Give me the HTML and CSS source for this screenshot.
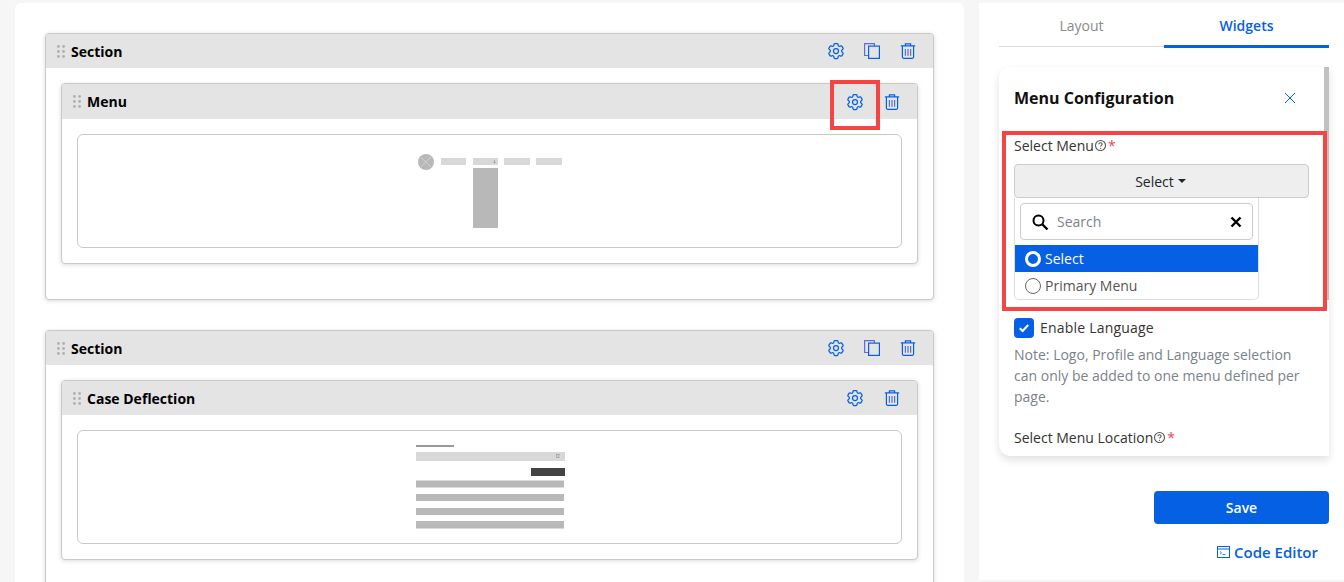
FILE: index.html
```html
<!DOCTYPE html>
<html lang="en">
<head>
    <meta charset="UTF-8">
    <meta name="viewport" content="width=device-width, initial-scale=1.0">
    <title>Page Builder</title>
    <link rel="stylesheet" href="styles.css">
</head>
<body>
    <svg class="sprite" width="0" height="0">
        <symbol id="i-gear" viewBox="0 0 24 24">
            <path fill="none" stroke="currentColor" stroke-width="1.5" d="M9.594 3.94c.09-.542.56-.94 1.11-.94h2.593c.55 0 1.02.398 1.11.94l.213 1.281c.063.374.313.686.645.87.074.04.147.083.22.127.325.196.72.257 1.075.124l1.217-.456a1.125 1.125 0 0 1 1.37.49l1.296 2.247a1.125 1.125 0 0 1-.26 1.431l-1.003.827c-.293.241-.438.613-.43.992a7.723 7.723 0 0 1 0 .255c-.008.378.137.75.43.991l1.004.827c.424.35.534.955.26 1.43l-1.298 2.247a1.125 1.125 0 0 1-1.369.491l-1.217-.456c-.355-.133-.75-.072-1.076.124a6.47 6.47 0 0 1-.22.128c-.331.183-.581.495-.644.869l-.213 1.281c-.09.543-.56.94-1.11.94h-2.594c-.55 0-1.019-.398-1.11-.94l-.213-1.281c-.062-.374-.312-.686-.644-.87a6.52 6.52 0 0 1-.22-.127c-.325-.196-.72-.257-1.076-.124l-1.217.456a1.125 1.125 0 0 1-1.369-.49l-1.297-2.247a1.125 1.125 0 0 1 .26-1.431l1.004-.827c.292-.24.437-.613.43-.991a6.932 6.932 0 0 1 0-.255c.007-.38-.138-.751-.43-.992l-1.004-.827a1.125 1.125 0 0 1-.26-1.43l1.297-2.247a1.125 1.125 0 0 1 1.37-.491l1.216.456c.356.133.751.072 1.076-.124.072-.044.146-.086.22-.128.332-.183.582-.495.644-.869l.214-1.28Z"/>
            <circle cx="12" cy="12" r="3" fill="none" stroke="currentColor" stroke-width="1.5"/>
        </symbol>
        <symbol id="i-copy" viewBox="0 0 16 16">
            <path fill="none" stroke="#5b6fd8" stroke-width="1.2" d="M4 12.5H.6V.6h9.8V3"/>
            <rect x="4.6" y="3.1" width="10.8" height="12.3" fill="none" stroke="currentColor" stroke-width="1.2"/>
        </symbol>
        <symbol id="i-trash" viewBox="0 0 16 16">
            <path fill="none" stroke="currentColor" stroke-width="1.2" d="M.8 2.9h14.4M5.4 2.9V.8h5.2v2.1M2.4 2.9v11.2c0 .7.5 1.2 1.2 1.2h8.8c.7 0 1.2-.5 1.2-1.2V2.9"/>
            <path fill="none" stroke="#5b6fd8" stroke-width="1.2" d="M5.4 6v6.8M8 6v6.8M10.6 6v6.8"/>
        </symbol>
        <symbol id="i-drag" viewBox="0 0 8 13">
            <circle cx="1.4" cy="1.5" r="1.4"/><circle cx="6.6" cy="1.5" r="1.4"/>
            <circle cx="1.4" cy="6.5" r="1.4"/><circle cx="6.6" cy="6.5" r="1.4"/>
            <circle cx="1.4" cy="11.5" r="1.4"/><circle cx="6.6" cy="11.5" r="1.4"/>
        </symbol>
        <symbol id="i-help" viewBox="0 0 12 12">
            <circle cx="6" cy="6" r="4.6" fill="none" stroke="currentColor"/>
            <path fill="none" stroke="currentColor" d="M4.5 4.9c0-2 3-2 3 0 0 1-1.5 1-1.5 2.1"/>
            <circle cx="6" cy="8.6" r=".6" fill="currentColor"/>
        </symbol>
    </svg>

    <div class="page">
        <main class="canvas">
            <section class="section">
                <div class="head">
                    <svg class="drag"><use href="#i-drag"/></svg>
                    <span class="head-title">Section</span>
                    <div class="head-actions">
                        <svg class="act gear"><use href="#i-gear"/></svg>
                        <svg class="act copy"><use href="#i-copy"/></svg>
                        <svg class="act trash"><use href="#i-trash"/></svg>
                    </div>
                </div>
                <div class="section-body">
                    <div class="widget">
                        <div class="head head-tall">
                            <svg class="drag"><use href="#i-drag"/></svg>
                            <span class="head-title">Menu</span>
                            <div class="head-actions">
                                <svg class="act gear"><use href="#i-gear"/></svg>
                                <svg class="act trash"><use href="#i-trash"/></svg>
                            </div>
                        </div>
                        <div class="widget-body">
                            <div class="preview">
                                <svg width="144" height="74" viewBox="0 0 144 74">
                                    <circle cx="8" cy="8" r="8" fill="#b8b8b8"/>
                                    <path d="M3 3l10 10M13 3L3 13" stroke="#d4d4d4" stroke-width=".8"/>
                                    <rect x="23" y="4" width="25" height="7" fill="#d8d8d8"/>
                                    <rect x="55" y="4" width="25" height="7" fill="#d8d8d8"/>
                                    <path d="M76.500 6v3M75.500 8l1 1.200 1-1.200" fill="none" stroke="#888" stroke-width=".6"/>
                                    <rect x="86" y="4" width="26" height="7" fill="#d8d8d8"/>
                                    <rect x="118" y="4" width="26" height="7" fill="#d8d8d8"/>
                                    <rect x="55" y="14" width="25" height="60" fill="#b8b8b8"/>
                                </svg>
                            </div>
                        </div>
                    </div>
                </div>
            </section>

            <section class="section">
                <div class="head">
                    <svg class="drag"><use href="#i-drag"/></svg>
                    <span class="head-title">Section</span>
                    <div class="head-actions">
                        <svg class="act gear"><use href="#i-gear"/></svg>
                        <svg class="act copy"><use href="#i-copy"/></svg>
                        <svg class="act trash"><use href="#i-trash"/></svg>
                    </div>
                </div>
                <div class="section-body">
                    <div class="widget">
                        <div class="head">
                            <svg class="drag"><use href="#i-drag"/></svg>
                            <span class="head-title">Case Deflection</span>
                            <div class="head-actions">
                                <svg class="act gear"><use href="#i-gear"/></svg>
                                <svg class="act trash"><use href="#i-trash"/></svg>
                            </div>
                        </div>
                        <div class="widget-body">
                            <div class="preview">
                                <svg class="wire-case" width="149" height="84" viewBox="0 0 149 84">
                                    <rect x="0" y="0" width="38" height="2" fill="#999"/>
                                    <rect x="0" y="7" width="149" height="9" fill="#d8d8d8"/>
                                    <rect x="140.500" y="9.500" width="2.500" height="3" fill="none" stroke="#999" stroke-width=".7"/>
                                    <rect x="115" y="23" width="34" height="8" fill="#444"/>
                                    <rect x="0" y="35.500" width="148" height="7" fill="#b8b8b8"/>
                                    <rect x="0" y="49" width="148" height="7" fill="#b8b8b8"/>
                                    <rect x="0" y="63" width="148" height="7" fill="#b8b8b8"/>
                                    <rect x="0" y="76" width="148" height="7.500" fill="#b8b8b8"/>
                                </svg>
                            </div>
                        </div>
                    </div>
                </div>
            </section>
        </main>

        <aside class="side">
            <div class="tabs">
                <div class="tab">Layout</div>
                <div class="tab tab-active">Widgets</div>
            </div>

            <div class="config">
                <div class="config-title">
                    <span>Menu Configuration</span>
                    <svg class="close" width="12" height="12" viewBox="0 0 12 12"><path d="M1 1l10 10M11 1L1 11" stroke="#0560e3" stroke-width="1"/></svg>
                </div>

                <label class="field-label">Select Menu<svg class="help"><use href="#i-help"/></svg><span class="req">*</span></label>
                <div class="select-btn">Select<span class="caret"></span></div>
                <div class="dropdown">
                    <div class="search">
                        <svg width="18" height="18" viewBox="0 0 18 18"><circle cx="7.500" cy="7.500" r="5" fill="none" stroke="#000" stroke-width="2"/><path d="M11.500 11.500l5 5" stroke="#000" stroke-width="2.400"/></svg>
                        <span class="search-text">Search</span>
                        <svg width="12" height="12" viewBox="0 0 12 12"><path d="M1.500 1.500l9 9M10.500 1.500l-9 9" stroke="#000" stroke-width="2.400"/></svg>
                    </div>
                    <div class="option option-active"><span class="radio radio-on"></span>Select</div>
                    <div class="option"><span class="radio"></span>Primary Menu</div>
                </div>

                <div class="check-row">
                    <span class="check">
                        <svg width="12" height="10" viewBox="0 0 12 10"><path d="M1.800 5.200l2.800 2.800 5.600-6" fill="none" stroke="#fff" stroke-width="2"/></svg>
                    </span>
                    Enable Language
                </div>
                <p class="note">Note: Logo, Profile and Language selection can only be added to one menu defined per page.</p>

                <label class="field-label field-label-last">Select Menu Location<svg class="help"><use href="#i-help"/></svg><span class="req">*</span></label>

                <div class="scrollbar"></div>
            </div>

            <div class="side-foot">
                <button class="save">Save</button>
                <a class="code-link">
                    <svg width="13" height="12" viewBox="0 0 13 12"><rect x=".5" y=".5" width="12" height="11" fill="none" stroke="#0560e3"/><path d="M.5 3h12" stroke="#0560e3"/><path d="M3 5.500l1.500 1.300L3 8M5.500 8.500h3" fill="none" stroke="#0560e3" stroke-width=".8"/></svg>
                    Code Editor
                </a>
            </div>
        </aside>
    </div>

    <!-- highlight boxes drawn over the screen -->
    <div class="mark mark-gear"></div>
    <div class="mark mark-select"></div>
</body>
</html>
```

FILE: styles.css
```css
* {
    box-sizing: border-box;
}

html, body {
    height: 582px;
}

body {
    margin: 0;
    overflow: hidden;
    position: relative;
    font-family: "Open Sans", sans-serif;
    font-size: 14px;
    color: #212529;
    background-color: #f6f6f6;
}

.sprite {
    position: absolute;
}

.page {
    display: flex;
    gap: 15px;
    height: 582px;
    padding: 3px 0 0 15px;
    overflow: hidden;
}

/* left canvas */
.canvas {
    width: 949px;
    height: 640px;
    padding: 30px;
    background-color: #fff;
    border-radius: 6px 6px 0 0;
}

.section {
    margin-bottom: 30px;
    background-color: #fff;
    border: 1px solid #c9c9c9;
    border-radius: 4px;
    box-shadow: 0 1px 4px rgba(0, 0, 0, 0.15);
}

.section-body {
    padding: 15px 15px 35px;
}

.head {
    display: flex;
    align-items: center;
    height: 34px;
    padding: 0 10px 0 11px;
    background-color: #e4e4e4;
    border-radius: 3px 3px 0 0;
}

.head-tall {
    height: 35px;
}

.drag {
    width: 8px;
    height: 13px;
    margin-right: 6px;
    fill: #b0b0b0;
}

.head-title {
    font-weight: 700;
    color: #000;
}

.head-actions {
    display: flex;
    align-items: center;
    margin-left: auto;
}

.act {
    color: #0560e3;
}

.gear {
    width: 20px;
    height: 20px;
}

.copy {
    width: 16px;
    height: 16px;
    margin-left: 18px;
}

.trash {
    width: 16px;
    height: 16px;
    margin: 0 7px 0 20px;
}

.widget {
    background-color: #fff;
    border: 1px solid #c9c9c9;
    border-radius: 4px;
    box-shadow: 0 1px 4px rgba(0, 0, 0, 0.15);
}

.widget .trash {
    margin-left: 19px;
}

.widget-body {
    padding: 15px;
}

.preview {
    display: flex;
    justify-content: center;
    align-items: center;
    height: 114px;
    border: 1px solid #c9c9c9;
    border-radius: 6px;
}

.wire-case {
    margin-left: 2px;
}

/* right panel */
.side {
    position: relative;
    width: 365px;
    height: 577px;
    padding: 0 15px 0 20px;
    background-color: #fff;
}

.tabs {
    display: flex;
    height: 44px;
    border-bottom: 1px solid #dcdcdc;
}

.tab {
    flex: 1;
    padding-top: 13px;
    text-align: center;
    color: #8a8a8a;
}

.tab-active {
    height: 45px;
    font-weight: 600;
    color: #0560e3;
    border-bottom: 3px solid #0560e3;
}

.config {
    position: relative;
    height: 389px;
    margin-top: 20px;
    padding: 0 20px 0 15px;
    overflow: hidden;
    background-color: #fff;
    border-radius: 12px 0 0 12px;
    box-shadow: 0 4px 8px rgba(0, 0, 0, 0.12);
}

.config-title {
    display: flex;
    align-items: center;
    justify-content: space-between;
    height: 62px;
    padding: 0 13px 0 0;
    font-size: 16px;
    font-weight: 700;
    color: #111;
}

.field-label {
    display: flex;
    align-items: center;
    height: 20px;
    margin-top: 6px;
    margin-bottom: 9px;
    color: #333;
}

.field-label-last {
    margin-top: 20px;
}

.help {
    width: 13px;
    height: 13px;
    color: #555;
}

.req {
    margin-left: 1px;
    color: #e8425a;
}

.select-btn {
    display: flex;
    justify-content: center;
    align-items: center;
    height: 34px;
    padding-right: 2px;
    background-color: #eee;
    border: 1px solid #ccc;
    border-radius: 4px;
    color: #212529;
}

.caret {
    width: 0;
    height: 0;
    margin-left: 4px;
    border: 4px solid transparent;
    border-top-color: #212529;
    border-bottom-width: 0;
}

.dropdown {
    width: 245px;
    height: 102px;
    padding-top: 5px;
    background-color: #fff;
    border: 1px solid #ddd;
    border-top: 0;
    border-radius: 0 0 5px 5px;
}

.search {
    display: flex;
    align-items: center;
    height: 37px;
    margin: 0 5px 5px;
    padding: 0 10px;
    border: 1px solid #ccc;
    border-radius: 4px;
}

.search-text {
    flex: 1;
    margin-left: 8px;
    color: #7b8289;
}

.option {
    display: flex;
    align-items: center;
    height: 27px;
    padding-left: 10px;
    color: #555;
}

.option-active {
    background-color: #0560e3;
    color: #fff;
}

.radio {
    width: 16px;
    height: 16px;
    margin-right: 4px;
    background-color: #fff;
    border: 1px solid #666;
    border-radius: 50%;
}

.radio-on {
    background-color: #0560e3;
    border: 3px solid #fff;
}

.check-row {
    display: flex;
    align-items: center;
    gap: 6px;
    height: 20px;
    margin-top: 18px;
    font-weight: 500;
    letter-spacing: 0.2px;
    line-height: 18px;
    color: #333;
}

.check {
    display: flex;
    justify-content: center;
    align-items: center;
    width: 20px;
    height: 20px;
    background-color: #0560e3;
    border-radius: 4px;
}

.note {
    margin: 6px 0 0;
    line-height: 21px;
    color: #7b8289;
}

.scrollbar {
    position: absolute;
    top: 0;
    right: 0;
    width: 5px;
    height: 233px;
    background-color: #c1c1c1;
}

.side-foot {
    display: flex;
    flex-direction: column;
    align-items: flex-end;
    margin-top: 35px;
}

.save {
    width: 175px;
    height: 33px;
    font: 600 14px "Open Sans", sans-serif;
    color: #fff;
    background-color: #0560e3;
    border: 0;
    border-radius: 4px;
}

.code-link {
    display: flex;
    align-items: center;
    gap: 4px;
    margin: 18px 11px 0 0;
    font-size: 15px;
    font-weight: 600;
    color: #0560e3;
}

/* red highlight boxes */
.mark {
    position: absolute;
    border: 4px solid #f44545;
}

.mark-gear {
    left: 830px;
    top: 80px;
    width: 50px;
    height: 50px;
}

.mark-select {
    left: 1002px;
    top: 131px;
    width: 325px;
    height: 180px;
}
```
